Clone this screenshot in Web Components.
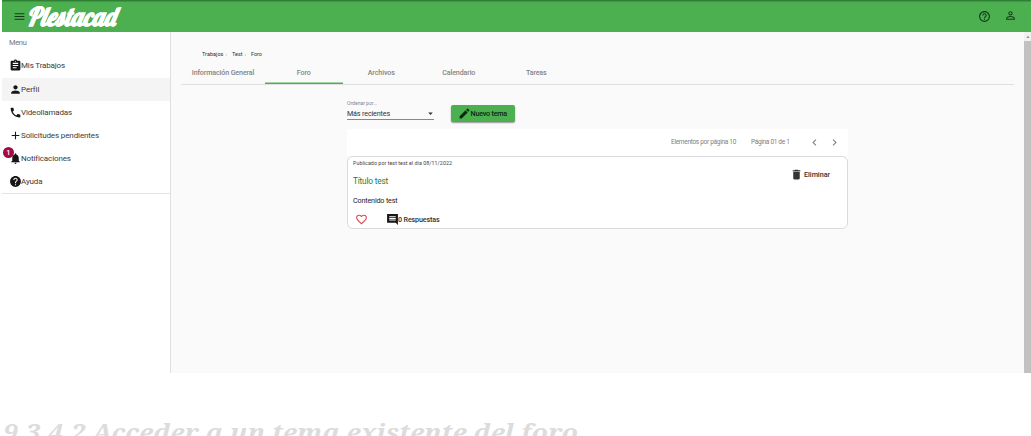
<!DOCTYPE html>
<html lang="es">
<head>
<meta charset="utf-8">
<title>Plestacad</title>
<style>
html,body{margin:0;height:436px;overflow:hidden;background:#fff}
body{font-family:Roboto,sans-serif;color:#3c3c3c}
</style>
</head>
<body>
<plestacad-app></plestacad-app>
<script>
const define=(name,html,after)=>customElements.define(name,class extends HTMLElement{
  connectedCallback(){
    if(this.shadowRoot)return;
    this.attachShadow({mode:'open'}).innerHTML=html;
    if(after)after(this,this.shadowRoot);
  }
});

const ICONS={
  menu:'M3 18h18v-2H3v2zm0-5h18v-2H3v2zm0-7v2h18V6H3z',
  assignment:'M19 3h-4.18C14.4 1.84 13.3 1 12 1c-1.3 0-2.4.84-2.82 2H5c-1.1 0-2 .9-2 2v14c0 1.1.9 2 2 2h14c1.1 0 2-.9 2-2V5c0-1.1-.9-2-2-2zm-7 0c.55 0 1 .45 1 1s-.45 1-1 1-1-.45-1-1 .45-1 1-1zm2 14H7v-2h7v2zm3-4H7v-2h10v2zm0-4H7V7h10v2z',
  person:'M12 12c2.21 0 4-1.79 4-4s-1.79-4-4-4-4 1.79-4 4 1.79 4 4 4zm0 2c-2.67 0-8 1.34-8 4v2h16v-2c0-2.66-5.33-4-8-4z',
  phone:'M6.62 10.79c1.44 2.83 3.76 5.14 6.59 6.59l2.2-2.2c.27-.27.67-.36 1.02-.24 1.12.37 2.33.57 3.57.57.55 0 1 .45 1 1V20c0 .55-.45 1-1 1-9.39 0-17-7.61-17-17 0-.55.45-1 1-1h3.5c.55 0 1 .45 1 1 0 1.25.2 2.45.57 3.57.11.35.03.74-.25 1.02l-2.2 2.2z',
  add:'M19 13h-6v6h-2v-6H5v-2h6V5h2v6h6v2z',
  bell:'M12 22c1.1 0 2-.9 2-2h-4c0 1.1.89 2 2 2zm6-6v-5c0-3.07-1.64-5.64-4.5-6.32V4c0-.83-.67-1.5-1.5-1.5s-1.5.67-1.5 1.5v.68C7.63 5.36 6 7.92 6 11v5l-2 2v1h16v-1l-2-2z',
  help:'M12 2C6.48 2 2 6.48 2 12s4.48 10 10 10 10-4.48 10-10S17.52 2 12 2zm1 17h-2v-2h2v2zm2.07-7.75l-.9.92C13.45 12.9 13 13.5 13 15h-2v-.5c0-1.1.45-2.1 1.17-2.83l1.24-1.26c.37-.36.59-.86.59-1.41 0-1.1-.9-2-2-2s-2 .9-2 2H8c0-2.21 1.79-4 4-4s4 1.79 4 4c0 .88-.36 1.68-.93 2.25z',
  helpOutline:'M11 18h2v-2h-2v2zm1-16C6.48 2 2 6.48 2 12s4.48 10 10 10 10-4.48 10-10S17.52 2 12 2zm0 18c-4.41 0-8-3.59-8-8s3.59-8 8-8 8 3.59 8 8-3.59 8-8 8zm0-14c-2.21 0-4 1.79-4 4h2c0-1.1.9-2 2-2s2 .9 2 2c0 2-3 1.75-3 5h2c0-2.25 3-2.5 3-5 0-2.21-1.79-4-4-4z',
  personOutline:'M12 5.9c1.16 0 2.1.94 2.1 2.1s-.94 2.1-2.1 2.1S9.9 9.16 9.9 8s.94-2.1 2.1-2.1m0 9c2.97 0 6.1 1.46 6.1 2.1v1.1H5.9V17c0-.64 3.13-2.1 6.1-2.1M12 4C9.79 4 8 5.79 8 8s1.79 4 4 4 4-1.79 4-4-1.79-4-4-4zm0 9c-2.67 0-8 1.34-8 4v3h16v-3c0-2.66-5.33-4-8-4z',
  edit:'M3 17.25V21h3.75L17.81 9.94l-3.75-3.75L3 17.25zM20.71 7.04c.39-.39.39-1.02 0-1.41l-2.34-2.34c-.39-.39-1.02-.39-1.41 0l-1.83 1.83 3.75 3.75 1.83-1.83z',
  trash:'M6 19c0 1.1.9 2 2 2h8c1.1 0 2-.9 2-2V7H6v12zM19 4h-3.500l-1-1h-5l-1 1H5v2h14V4z',
  heart:'M16.5 3c-1.74 0-3.41.81-4.5 2.09C10.91 3.81 9.24 3 7.5 3 4.42 3 2 5.42 2 8.5c0 3.78 3.4 6.86 8.55 11.54L12 21.350l1.45-1.32C18.600 15.360 22 12.280 22 8.500 22 5.420 19.580 3 16.500 3zm-4.400 15.550l-.1.1-.1-.1C7.140 14.240 4 11.390 4 8.500 4 6.500 5.500 5 7.500 5c1.540 0 3.040.99 3.570 2.360h1.870C13.460 5.990 14.960 5 16.500 5c2 0 3.500 1.500 3.500 3.500 0 2.890-3.140 5.740-7.900 10.050z',
  comment:'M2 2h20v20l-4-4H2V2zm16 12v-2H6v2h12zm0-3V9H6v2h12zm0-3V6H6v2h12z',
  left:'M15.410 7.410L14 6l-6 6 6 6 1.410-1.410L10.830 12z',
  right:'M10 6L8.590 7.410 13.170 12l-4.580 4.590L10 18l6-6z',
  down:'M7 10l5 5 5-5z',
  up:'M7 14l5-5 5 5z'
};
define('ui-icon','<style>:host{display:block;flex:none}svg{display:block;fill:currentColor}</style><svg viewBox="0 0 24 24"><path/></svg>',(el,r)=>{
  const s=el.getAttribute('size')||12,svg=r.querySelector('svg');
  svg.setAttribute('width',s);svg.setAttribute('height',s);
  r.querySelector('path').setAttribute('d',ICONS[el.getAttribute('name')]||'');
});

/* A single line of text tracked to fill the given measure. */
define('ui-line','<style>:host{display:block;flex:none;white-space:nowrap}span{display:inline-block}</style><span><slot></slot></span>',(el,r)=>{
  const w=+el.getAttribute('measure'),s=r.querySelector('span'),n=el.textContent.length;
  if(w){s.style.letterSpacing=((w-s.getBoundingClientRect().width)/n)+'px';el.style.width=w+'px';}
});

define('app-brand','<style>:host{display:block}svg{display:block;overflow:visible}text{font:italic 700 26px "Lobster","Liberation Serif",serif;fill:#fff;stroke:#fff;stroke-width:.2}</style><svg width="92" height="31"><text x="-2" y="24.500" textLength="88.500" lengthAdjust="spacingAndGlyphs">Plestacad</text></svg>');

define('app-header',`<style>
:host{display:flex;align-items:center;box-sizing:border-box;height:32px;margin-left:2px;background:#4caf50;border-top:1px solid #2f7f36;box-shadow:inset 0 1px #3f9844;color:#123c16;padding:0 14.500px 0 10.500px}
app-brand{margin-left:3px}
ui-icon{margin-top:-1px}
.gap{flex:1}.user{margin:-3px 0 0 12.500px}
</style><ui-icon name="menu" size="13"></ui-icon><app-brand></app-brand><span class="gap"></span><ui-icon name="helpOutline" size="13"></ui-icon><ui-icon class="user" name="personOutline" size="13"></ui-icon>`);

define('menu-item',`<style>
:host{display:flex;align-items:center;height:23.200px;padding-left:6.500px;font-size:8px;color:#3b3b3b}
:host([active]){background:#f4f4f4}
.i{position:relative;color:#161616;margin-right:-.5px}
b{position:absolute;left:-5.500px;top:-5px;width:11px;height:11px;border-radius:50%;background:#a80843;color:#fff;font:500 7.500px/11px Roboto,sans-serif;text-align:center}
</style><span class="i"></span><slot></slot>`,(el,r)=>{
  const box=r.querySelector('.i'),i=document.createElement('ui-icon');
  i.setAttribute('name',el.getAttribute('icon'));i.setAttribute('size','13');box.append(i);
  if(el.hasAttribute('badge')){const b=document.createElement('b');b.textContent=el.getAttribute('badge');box.append(b)}
});

define('app-sidebar',`<style>
:host{display:block;box-sizing:border-box;width:169px;margin-left:2px;border-right:1px solid #e0e0e0;background:#fff}
.h{height:22.500px;padding:0 0 0 7px;display:flex;align-items:center;font-size:7.500px;color:#777}
.h ui-line{margin-top:-1px}
nav{border-bottom:1px solid #e4e4e4;margin-top:-.2px}
</style><div class="h"><ui-line measure="17.500">Menu</ui-line></div><nav>
<menu-item icon="assignment"><ui-line measure="44">Mis Trabajos</ui-line></menu-item>
<menu-item icon="person" active><ui-line measure="18">Perfil</ui-line></menu-item>
<menu-item icon="phone"><ui-line measure="51">Videollamadas</ui-line></menu-item>
<menu-item icon="add"><ui-line measure="78">Solicitudes pendientes</ui-line></menu-item>
<menu-item icon="bell" badge="1"><ui-line measure="49.500">Notificaciones</ui-line></menu-item>
<menu-item icon="help"><ui-line measure="21.500">Ayuda</ui-line></menu-item>
</nav>`);

define('bread-crumbs',`<style>:host{display:flex;height:11px;align-items:center;padding:16px 0 0 31px;font-size:5.500px;color:#333}i{font-style:normal;color:#aaa;font-size:5px;width:8.500px;text-align:center;box-sizing:border-box;padding-right:3px}</style>
<ui-line measure="21.500">Trabajos</ui-line><i>›</i><ui-line measure="10.500">Test</ui-line><i>›</i><ui-line measure="11">Foro</ui-line>`);

define('tab-bar',`<style>
:host{display:grid;grid-template-columns:84px repeat(4,77.500px) 1fr;height:24.500px;margin:0 10px;border-bottom:1px solid #e0e0e0;font-size:7.100px;font-weight:500;color:#848484}
div{display:flex;align-items:center;justify-content:center;box-sizing:border-box;height:25px;padding-top:1px}
.on{box-shadow:inset 0 -1.500px #4caf50}
</style><div><ui-line measure="62.500">Información General</ui-line></div><div class="on"><ui-line measure="14">Foro</ui-line></div><div><ui-line measure="27">Archivos</ui-line></div><div><ui-line measure="33">Calendario</ui-line></div><div><ui-line measure="20.500">Tareas</ui-line></div>`);

define('sort-select',`<style>
:host{display:block;width:87px;border-bottom:1px solid #888;color:#3b3b3b}
.l{font-size:5.200px;line-height:7px;color:#888}
.v{display:flex;justify-content:space-between;align-items:center;height:12px;font-size:7.200px;color:#333}
ui-icon{margin-right:-1.500px}
</style><div class="l"><ui-line measure="30">Ordenar por...</ui-line></div><div class="v"><ui-line measure="43">Más recientes</ui-line><ui-icon name="down" size="11"></ui-icon></div>`);

define('new-topic',`<style>:host{display:flex;align-items:center;box-sizing:border-box;width:64px;height:17px;padding-left:7px;border-radius:2px;background:#4caf50;box-shadow:0 1px 1.500px #0006;color:#0c280e;font-size:7.200px;font-weight:500}</style><ui-icon name="edit" size="13"></ui-icon><ui-line measure="36.500">Nuevo tema</ui-line>`);

define('page-nav',`<style>:host{display:flex;align-items:center;justify-content:flex-end;height:27px;padding-right:7.500px;background:#fff;color:#808080;font-size:6.500px}
.p{margin:0 18.500px 0 15px}.n{margin-left:6.500px}</style><ui-line measure="65">Elementos por página 10</ui-line><ui-line class="p" measure="38.500">Página 01 de 1</ui-line><ui-icon name="left" size="13"></ui-icon><ui-icon class="n" name="right" size="13"></ui-icon>`);

define('topic-card',`<style>
:host{display:flex;justify-content:space-between;box-sizing:border-box;height:73px;border:1px solid #dadada;border-radius:6px;background:#fff;padding:3px 17px 0 5px;color:#333}
.d{font-size:5.300px;line-height:7px;color:#444}
.t{font-size:8.300px;line-height:10px;margin-top:9px;color:#2c7c31}
.c{font-size:7.200px;line-height:9px;margin-top:10px;color:#222}
.a{display:flex;align-items:center;height:12px;margin:9px 0 0 2px;font-size:7.200px;font-weight:500}
.h{color:#df414f;margin-right:18px}.m{color:#161616;margin-right:-1px}
.e{display:flex;align-items:center;gap:1px;height:12px;margin-top:9px;font-size:7.200px;font-weight:500}
</style><div><div class="d"><ui-line measure="99">Publicado por test test el día 08/11/2022</ui-line></div><div class="t"><ui-line measure="35">Título test</ui-line></div><div class="c"><ui-line measure="44.500">Contenido test</ui-line></div>
<div class="a"><ui-icon class="h" name="heart" size="13"></ui-icon><ui-icon class="m" name="comment" size="13"></ui-icon><ui-line measure="41.500">0 Respuestas</ui-line></div></div>
<div class="e"><ui-icon name="trash" size="13"></ui-icon><ui-line measure="26">Eliminar</ui-line></div>`);

define('scroll-rail',`<style>:host{display:flex;flex-direction:column;width:7px;background:#f1f1f1;color:#777}ui-icon{margin:1px 0 0 -.5px}.t{flex:1;background:#c1c1c1}</style><ui-icon name="up" size="8"></ui-icon><div class="t"></div>`);

define('forum-page',`<style>
:host{display:flex;flex:1;background:#fafafa}
main{flex:1}
.f{width:501px;margin:15.500px 0 0 176px}
.r{display:flex;align-items:flex-start;height:28.500px}
new-topic{margin:5px 0 0 16.500px}
</style><main><bread-crumbs></bread-crumbs><tab-bar></tab-bar><div class="f"><div class="r"><sort-select></sort-select><new-topic></new-topic></div><page-nav></page-nav><topic-card></topic-card></div></main><scroll-rail></scroll-rail>`);

define('section-title',`<style>:host{display:block;padding:44px 0 0 3px;color:#dcdcdc}svg{display:block;overflow:visible}text{fill:currentColor;font:italic 700 24px "Noto Serif","DejaVu Serif Condensed","DejaVu Serif",serif}</style><svg width="580" height="26"><text x="0" y="24" textLength="575" lengthAdjust="spacingAndGlyphs">9.3.4.2 Acceder a un tema existente del foro</text></svg>`);

define('plestacad-app',`<style>:host{display:block;height:436px;overflow:hidden}.b{display:flex;height:341px}</style><app-header></app-header><div class="b"><app-sidebar></app-sidebar><forum-page></forum-page></div><section-title></section-title>`);
</script>
</body>
</html>
